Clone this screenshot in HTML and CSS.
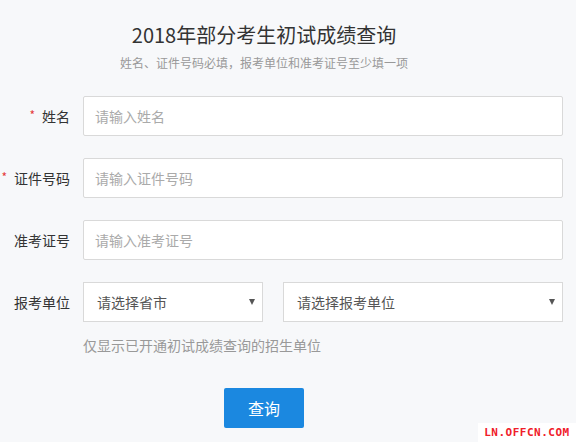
FILE: index.html
```html
<!DOCTYPE html>
<html lang="zh-CN">
<head>
    <meta charset="UTF-8">
    <meta name="viewport" content="width=device-width, initial-scale=1.0">
    <title>2018年部分考生初试成绩查询</title>
    <link rel="stylesheet" href="styles.css">
</head>
<body>
    <div class="page">
        <header class="head">
            <h1>2018年部分考生初试成绩查询</h1>
            <p>姓名、证件号码必填，报考单位和准考证号至少填一项</p>
        </header>

        <form class="query">
            <div class="row">
                <label class="label"><span class="req">*</span>姓名</label>
                <input class="field" type="text" placeholder="请输入姓名">
            </div>
            <div class="row">
                <label class="label"><span class="req">*</span>证件号码</label>
                <input class="field" type="text" placeholder="请输入证件号码">
            </div>
            <div class="row">
                <label class="label">准考证号</label>
                <input class="field" type="text" placeholder="请输入准考证号">
            </div>
            <div class="row">
                <label class="label">报考单位</label>
                <span class="pick pick-city">
                    <select>
                        <option>请选择省市</option>
                    </select>
                </span>
                <span class="pick pick-unit">
                    <select>
                        <option>请选择报考单位</option>
                    </select>
                </span>
            </div>
            <p class="tip">仅显示已开通初试成绩查询的招生单位</p>
            <div class="actions">
                <button type="submit">查询</button>
            </div>
        </form>
    </div>

    <div class="mark">LN.OFFCN.COM</div>
</body>
</html>
```

FILE: styles.css
```css
body {
    margin: 0;
    padding: 0;
    background: #f7f8fa;
    font-family: "Noto Sans CJK SC", "Microsoft YaHei", sans-serif;
    color: #333;
}

.page {
    padding-top: 21px;
}

.head {
    width: 528px;
    text-align: center;
}

.head h1 {
    margin: 0;
    font-size: 20px;
    font-weight: normal;
    line-height: 28px;
    color: #333;
}

.head p {
    margin: 5px 0 0;
    font-size: 12px;
    line-height: 18px;
    color: #999;
}

.query {
    margin-top: 24px;
}

.row {
    display: flex;
    align-items: center;
    margin-bottom: 22px;
}

.label {
    width: 70px;
    margin-right: 13px;
    text-align: right;
    font-size: 14px;
    color: #333;
}

.req {
    color: #e4393c;
    font-size: 12px;
    margin-right: 7px;
    position: relative;
    top: -2px;
}

.field {
    width: 480px;
    height: 40px;
    box-sizing: border-box;
    padding: 0 11px;
    border: 1px solid #d9d9d9;
    border-radius: 2px;
    background: #fff;
    font-family: inherit;
    font-size: 14px;
    color: #333;
    outline: none;
}

.field::placeholder {
    color: #aaa;
}

.pick {
    position: relative;
    display: block;
}

.pick select {
    display: block;
    width: 100%;
    height: 40px;
    box-sizing: border-box;
    padding: 0 13px;
    border: 1px solid #d9d9d9;
    border-radius: 0;
    background: #fff;
    font-family: inherit;
    font-size: 14px;
    color: #555;
    appearance: none;
    -webkit-appearance: none;
    outline: none;
}

.pick::after {
    content: "";
    position: absolute;
    top: 17px;
    right: 8px;
    border-left: 3px solid transparent;
    border-right: 3px solid transparent;
    border-top: 6px solid #555;
    pointer-events: none;
}

.pick-city {
    width: 180px;
    margin-right: 20px;
}

.pick-unit {
    width: 280px;
}

.tip {
    margin: -9px 0 0 83px;
    font-size: 14px;
    line-height: 20px;
    color: #999;
}

.actions {
    width: 528px;
    margin-top: 33px;
    text-align: center;
}

.actions button {
    width: 80px;
    height: 40px;
    border: none;
    border-radius: 2px;
    background: #1b88e0;
    color: #fff;
    font-family: inherit;
    font-size: 16px;
    cursor: pointer;
}

.mark {
    position: absolute;
    right: 0;
    bottom: 0;
    width: 98px;
    height: 19px;
    background: #fff;
    color: #f0202a;
    font-family: "DejaVu Sans Mono", monospace;
    font-weight: bold;
    font-size: 11px;
    line-height: 19px;
    text-align: center;
    letter-spacing: 0.5px;
}
```
